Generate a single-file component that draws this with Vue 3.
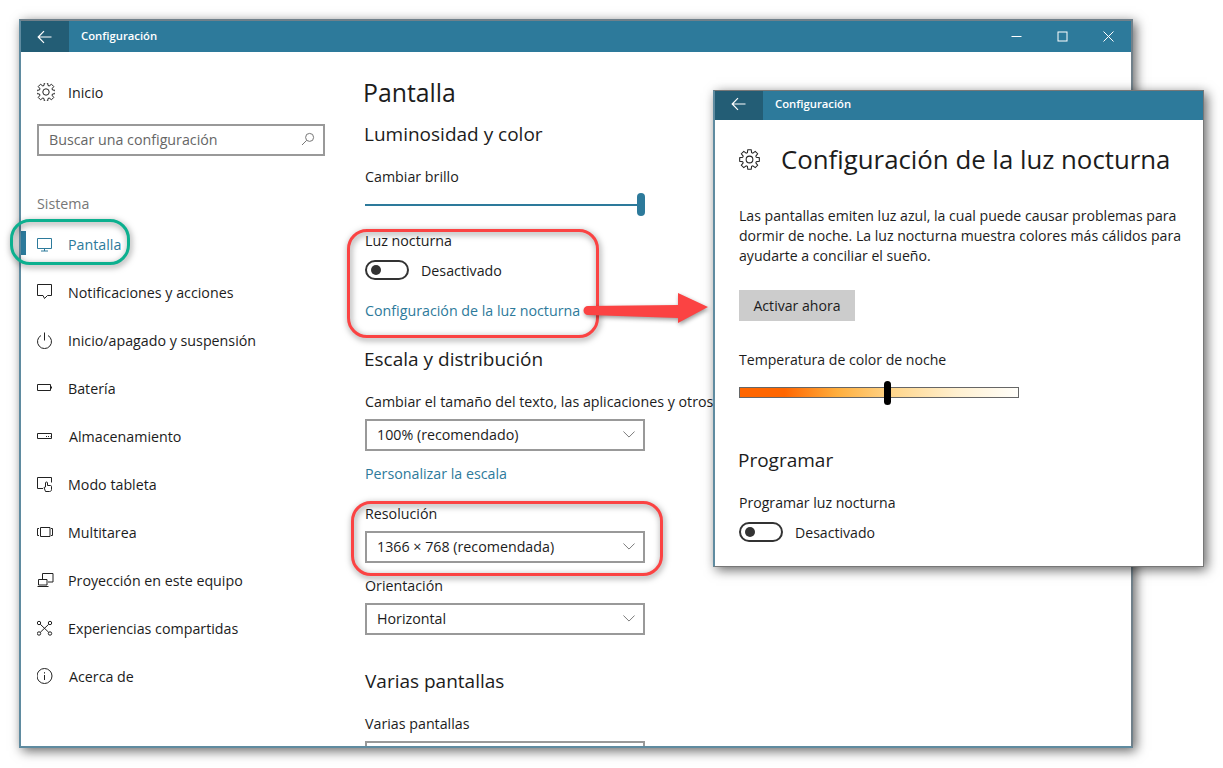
<script setup>
const navItems = [
  { label: 'Notificaciones y acciones', icon: 'chat' },
  { label: 'Inicio/apagado y suspensión', icon: 'power' },
  { label: 'Batería', icon: 'battery' },
  { label: 'Almacenamiento', icon: 'storage', nudge: true },
  { label: 'Modo tableta', icon: 'tablet' },
  { label: 'Multitarea', icon: 'multi' },
  { label: 'Proyección en este equipo', icon: 'project' },
  { label: 'Experiencias compartidas', icon: 'share' },
  { label: 'Acerca de', icon: 'info', nudge: true }
]

// 8 teeth, same outline for both gears
const gearPath = (() => {
  const pts = []
  const c = 10
  for (let i = 0; i < 8; i++) {
    const a = (i * Math.PI) / 4
    const steps = [[-0.3, 6.8], [-0.17, 9.5], [0.17, 9.5], [0.3, 6.8]]
    for (const [d, r] of steps) {
      pts.push(`${(c + r * Math.sin(a + d)).toFixed(2)} ${(c - r * Math.cos(a + d)).toFixed(2)}`)
    }
  }
  return 'M' + pts.join('L') + 'Z'
})()
</script>

<template>
  <div class="page">
    <section class="win main-win">
      <header class="titlebar">
        <button class="back">
          <svg width="16" height="14" viewBox="0 0 16 14"><path d="M14.5 7H1.5M7 1.2 1.2 7 7 12.8" fill="none" stroke="#fff" stroke-width="1.2" /></svg>
        </button>
        <span class="wintitle">Configuración</span>
        <div class="controls">
          <svg width="11" height="11" viewBox="0 0 11 11"><path d="M0.5 5.5h10" stroke="#fff" /></svg>
          <svg width="11" height="11" viewBox="0 0 11 11"><rect x="1" y="1" width="9" height="9" fill="none" stroke="#fff" /></svg>
          <svg width="11" height="11" viewBox="0 0 11 11"><path d="M0.5 0.5l10 10M10.5 0.5l-10 10" stroke="#fff" /></svg>
        </div>
      </header>

      <div class="win-body">
        <aside class="sidebar">
          <div class="nav-home">
            <svg class="ico" width="18" height="18" viewBox="1 1 18 18">
              <path :d="gearPath" fill="none" stroke="#222" stroke-width="1" />
              <circle cx="10" cy="10" r="3.2" fill="none" stroke="#222" stroke-width="1" />
            </svg>
            <span>Inicio</span>
          </div>
          <div class="search">
            <span>Buscar una configuración</span>
            <svg width="14" height="14" viewBox="0 0 14 14"><circle cx="8.6" cy="5.4" r="4" fill="none" stroke="#777" /><path d="M5.6 8.4 1 13" stroke="#777" /></svg>
          </div>
          <div class="group">Sistema</div>
          <div class="nav-item active">
            <svg class="ico" width="18" height="18" viewBox="2 0 18 18"><path d="M2.5 3.5h14v10h-14zM9.5 13.5v2.5M6 16h7" fill="none" stroke="#2d7a9b" /></svg>
            <span>Pantalla</span>
          </div>
          <div v-for="item in navItems" :key="item.label" class="nav-item" :class="{ nudge: item.nudge }">
            <svg class="ico" width="18" height="18" viewBox="2 0 18 18" fill="none" stroke="#222">
              <template v-if="item.icon === 'chat'">
                <path d="M2.5 1.5h14v11h-4l-3 3-1.500-3h-5.500z" />
              </template>
              <template v-else-if="item.icon === 'power'">
                <path d="M6 4.500a7 7 0 1 0 7 0M9.500 1.500v8" />
              </template>
              <template v-else-if="item.icon === 'battery'">
                <path d="M2.500 5.500h13v6h-13zM16.500 7.500v2" />
              </template>
              <template v-else-if="item.icon === 'storage'">
                <path d="M2.500 6.500h14v5h-14zM11 9.500h1M13 9.500h1M15 9.500h.5" />
              </template>
              <template v-else-if="item.icon === 'tablet'">
                <path d="M8 13.500H2.500v-11h14v5M10.500 16.500 9 12.500l1.500-.5V8a1 1 0 0 1 2 0v2.500h3c.8 0 1 .5 1 1v3c0 1.500-1 2-2 2z" />
              </template>
              <template v-else-if="item.icon === 'multi'">
                <path d="M5.500 4.500h9.500v9h-9.500zM4 5.500H2.500v7H4M16 5.500h1.500v7H16" />
              </template>
              <template v-else-if="item.icon === 'project'">
                <path d="M7.500 8V2.500h10.500v8.500H13M3.500 8.500h8.500v5.500H3.500zM2.500 15.500h11" />
              </template>
              <template v-else-if="item.icon === 'share'">
                <circle cx="4" cy="4" r="1.700" /><circle cx="15" cy="4" r="1.700" /><circle cx="4" cy="14.500" r="1.700" /><circle cx="15" cy="14.500" r="1.700" />
                <path d="M5.300 5.300l8.400 8M13.700 5.300l-8.400 8" />
              </template>
              <template v-else>
                <circle cx="9.500" cy="9" r="7.500" /><path d="M9.500 8v5M9.500 5.200v1.300" />
              </template>
            </svg>
            <span>{{ item.label }}</span>
          </div>
        </aside>

        <main class="content">
          <h1>Pantalla</h1>
          <h2 class="h-first">Luminosidad y color</h2>
          <div class="lbl lbl-brillo">Cambiar brillo</div>
          <div class="slider"><i></i></div>
          <div class="lbl lbl-luz">Luz nocturna</div>
          <div class="toggle-row">
            <span class="toggle"></span>
            <span>Desactivado</span>
          </div>
          <a class="link link-luz">Configuración de la luz nocturna</a>
          <h2 class="h-escala">Escala y distribución</h2>
          <div class="lbl lbl-size">Cambiar el tamaño del texto, las aplicaciones y otros</div>
          <div class="select">
            <span>100% (recomendado)</span>
            <svg width="12" height="7" viewBox="0 0 14 8"><path d="M0.500 0.500 7 7l6.500-6.500" fill="none" stroke="#666" /></svg>
          </div>
          <a class="link link-escala">Personalizar la escala</a>
          <div class="lbl lbl-res">Resolución</div>
          <div class="select">
            <span>1366 × 768 (recomendada)</span>
            <svg width="12" height="7" viewBox="0 0 14 8"><path d="M0.500 0.500 7 7l6.500-6.500" fill="none" stroke="#666" /></svg>
          </div>
          <div class="lbl lbl-ori">Orientación</div>
          <div class="select">
            <span>Horizontal</span>
            <svg width="12" height="7" viewBox="0 0 14 8"><path d="M0.500 0.500 7 7l6.500-6.500" fill="none" stroke="#666" /></svg>
          </div>
          <h2 class="h-varias">Varias pantallas</h2>
          <div class="lbl lbl-varias">Varias pantallas</div>
          <div class="select"></div>
        </main>
      </div>
    </section>

    <section class="win night-win">
      <header class="titlebar small">
        <button class="back">
          <svg width="16" height="14" viewBox="0 0 16 14"><path d="M14.500 7H1.500M7 1.200 1.200 7 7 12.800" fill="none" stroke="#fff" stroke-width="1.200" /></svg>
        </button>
        <span class="wintitle">Configuración</span>
      </header>
      <div class="night-body">
        <div class="night-head">
          <svg width="21" height="21" viewBox="0 0 20 20">
            <path :d="gearPath" fill="none" stroke="#222" stroke-width="1" />
            <circle cx="10" cy="10" r="3.200" fill="none" stroke="#222" stroke-width="1" />
          </svg>
          <h1>Configuración de la luz nocturna</h1>
        </div>
        <p class="desc">Las pantallas emiten luz azul, la cual puede causar problemas para dormir de noche. La luz nocturna muestra colores más cálidos para ayudarte a conciliar el sueño.</p>
        <div class="btn">Activar ahora</div>
        <div class="lbl lbl-temp">Temperatura de color de noche</div>
        <div class="temp"><i></i></div>
        <h2 class="h-prog">Programar</h2>
        <div class="lbl lbl-prog">Programar luz nocturna</div>
        <div class="toggle-row">
          <span class="toggle"></span>
          <span>Desactivado</span>
        </div>
      </div>
    </section>

    <div class="mark mark-green"></div>
    <div class="mark mark-luz"></div>
    <div class="mark mark-res"></div>
    <svg class="arrow" width="140" height="44" viewBox="0 0 140 44">
      <path d="M7 19 97 18V6l30 14-30 16V31L7 28a4.500 4.500 0 0 1 0-9z" fill="#fb4343" />
    </svg>
  </div>
</template>

<style>
html, body { margin: 0; background: #fff; }
</style>

<style scoped>
.page {
  position: relative;
  width: 1223px;
  height: 768px;
  overflow: hidden;
  background: #fff;
  font-family: "Open Sans", "Liberation Sans", sans-serif;
  font-size: 14.25px;
  color: #1c1c1c;
}
.win {
  position: absolute;
  box-sizing: border-box;
  background: #fff;
  overflow: hidden;
  display: flex;
  flex-direction: column;
  box-shadow: 3px 3px 11px rgba(0, 0, 0, 0.6);
}
.main-win { left: 19px; top: 19px; width: 1114px; height: 729px; border: 2px solid #5f8ba0; border-top-color: #70808a; border-right-color: #70808a; }
.night-win { left: 713px; top: 90px; width: 491px; height: 477px; border: 1px solid #777; border-left-width: 2px; border-left-color: #5f8ba0; }

.titlebar { display: flex; align-items: center; height: 31px; flex: none; background: #2d7a9b; color: #fff; }
.titlebar.small { height: 29px; }
.back { width: 48px; height: 100%; padding: 0; border: 0; background: #235d75; display: flex; align-items: center; justify-content: center; }
.small .back { padding-bottom: 3px; }
.wintitle { margin-left: 12px; padding-bottom: 2px; font-size: 11.3px; font-weight: 600; }
.small .wintitle { padding-bottom: 4px; }
.controls { margin-left: auto; display: flex; align-items: center; gap: 35px; padding-right: 17px; }

.win-body { display: flex; flex: 1; min-height: 0; }
.sidebar { width: 344px; flex: none; padding-left: 16px; box-sizing: border-box; }
.ico { flex: none; margin-right: 13px; }
.nav-home { display: flex; align-items: center; height: 48px; margin-top: 16px; }
.search {
  display: flex;
  align-items: center;
  justify-content: space-between;
  box-sizing: border-box;
  width: 288px;
  height: 32px;
  margin-top: 8px;
  padding: 0 8px 2px 10px;
  border: 2px solid #999;
  color: #666;
}
.group { margin-top: 34px; height: 27px; line-height: 27px; color: #777; }
.nav-item { position: relative; display: flex; align-items: center; height: 48px; }
.nav-item.nudge span { margin-left: 1px; }
.nav-item.active { color: #2d7a9b; margin-top: 3px; }
.nav-item.active::before { content: ""; position: absolute; left: -16px; top: 11px; width: 5px; height: 24px; background: #2d7a9b; }

.content { flex: 1; min-width: 0; }
.content h1 { margin: 22px 0 0 -2px; height: 36px; line-height: 36px; font-size: 24.8px; font-weight: 400; }
h2 { margin: 0; font-size: 19px; font-weight: 400; line-height: 24px; }
.h-first { margin: 12px 0 0 -1px; }
.lbl { line-height: 20px; white-space: nowrap; }
.lbl-brillo { margin-top: 21px; }
.slider { position: relative; width: 276px; height: 2px; margin-top: 17px; background: #2d7a9b; }
.slider i { position: absolute; right: -4px; top: -11px; width: 8px; height: 23px; border-radius: 4px; background: #2d7a9b; }
.lbl-luz { margin-top: 25px; }
.toggle-row { display: flex; align-items: center; gap: 12px; height: 20px; margin-top: 9px; }
.toggle { position: relative; box-sizing: border-box; width: 44px; height: 20px; border: 2px solid #333; border-radius: 10px; }
.toggle::after { content: ""; position: absolute; left: 4px; top: 3px; width: 10px; height: 10px; border-radius: 50%; background: #333; }
.link { display: block; color: #2d7a9b; line-height: 20px; }
.link-luz { margin-top: 21px; }
.h-escala { margin: 26px 0 0 -1px; }
.lbl-size { margin-top: 21px; }
.select {
  display: flex;
  align-items: center;
  justify-content: space-between;
  box-sizing: border-box;
  width: 280px;
  height: 32px;
  margin-top: 7px;
  padding: 0 8px 2px 10px;
  border: 2px solid #999;
}
.link-escala { margin-top: 13px; }
.lbl-res { margin-top: 20px; }
.lbl-ori { margin-top: 13px; }
.h-varias { margin-top: 34px; }
.lbl-varias { margin-top: 21px; }

.night-body { padding: 0 24px; font-size: 14.1px; }
.night-head { display: flex; align-items: center; gap: 21px; margin-top: 21px; }
.night-head h1 { margin: 0; line-height: 36px; font-size: 25.8px; font-weight: 400; white-space: nowrap; }
.desc { margin: 29px -6px 0 0; line-height: 20px; }
.btn { width: 116px; height: 31px; margin-top: 24px; line-height: 31px; text-align: center; background: #ccc; }
.lbl-temp { margin-top: 29px; }
.temp {
  position: relative;
  box-sizing: border-box;
  width: 280px;
  height: 11px;
  margin-top: 17px;
  border: 1px solid #666;
  background: linear-gradient(90deg, #ff6600 0%, #ff6600 16%, #ffae3d 35%, #ffd68c 55%, #fff0d0 78%, #fffefa 100%);
}
.temp i { position: absolute; left: 144px; top: -7px; width: 7px; height: 24px; border-radius: 4px; background: #000; }
.h-prog { margin: 50px 0 0 -1px; }
.lbl-prog { margin-top: 21px; }
.night-body .toggle-row { margin-top: 9px; }

.mark { position: absolute; box-sizing: border-box; border-style: solid; background: transparent; filter: drop-shadow(1px 2px 3px rgba(0, 0, 0, 0.5)); }
.mark-green { left: 10px; top: 219px; width: 120px; height: 46px; border-width: 3px; border-color: #0cb08f; border-radius: 20px; }
.mark-luz { left: 347px; top: 229px; width: 252px; height: 109px; border-width: 3.5px; border-color: #fb4343; border-radius: 20px; }
.mark-res { left: 351px; top: 501px; width: 312px; height: 75px; border-width: 3.5px; border-color: #fb4343; border-radius: 20px; }
.arrow { position: absolute; left: 581px; top: 287px; filter: drop-shadow(1px 2px 2px rgba(0, 0, 0, 0.4)); }
</style>
